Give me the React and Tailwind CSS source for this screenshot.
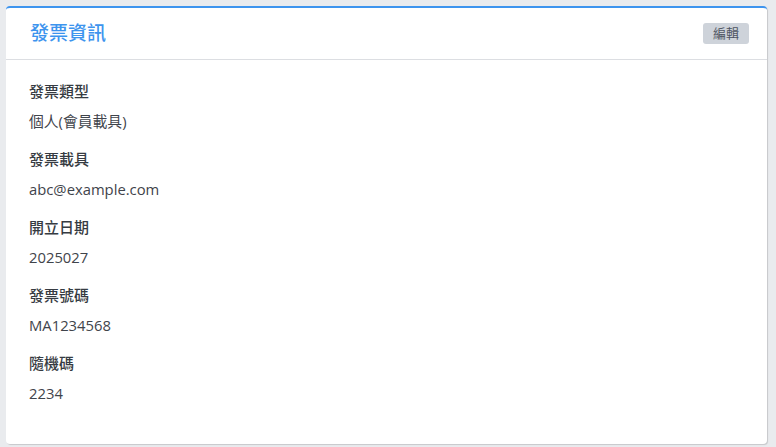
export default function App() {
  const rows = [
    ["發票類型", "個人(會員載具)"],
    ["發票載具", "abc@example.com"],
    ["開立日期", "2025027"],
    ["發票號碼", "MA1234568"],
    ["隨機碼", "2234"],
  ];
  return (
    <div
      className="w-[776px] h-[447px] bg-[#e9ebee] pt-[6px] pl-[6px]"
      style={{ fontFamily: '"Open Sans", "Noto Sans CJK TC", sans-serif' }}
    >
      <div className="w-[761px] h-[438px] bg-white rounded-[4px] border-t-[2px] border-[#3d94ee] shadow-[1px_1px_1px_rgba(0,0,0,0.15)]">
        <div className="h-[52px] flex items-center justify-between pl-[24px] pr-[18px] border-b border-[#dcdee2]">
          <div className="text-[19px] text-[#3d94ee] font-medium leading-none">發票資訊</div>
          <div className="w-[46px] h-[21px] rounded-[3px] bg-[#ced3da] text-[#4f5662] text-[13px] flex items-center justify-center leading-none">
            編輯
          </div>
        </div>
        <div className="pl-[23px] pt-[20px] flex flex-col">
          {rows.map(([k, v]) => (
            <div key={k} className="h-[68px] flex flex-col">
              <div className="h-[22px] flex items-center text-[15px] font-medium text-[#363b42] leading-none">{k}</div>
              <div className="h-[38px] flex items-center text-[14.8px] text-[#3f444b] leading-none">{v}</div>
            </div>
          ))}
        </div>
      </div>
    </div>
  );
}
